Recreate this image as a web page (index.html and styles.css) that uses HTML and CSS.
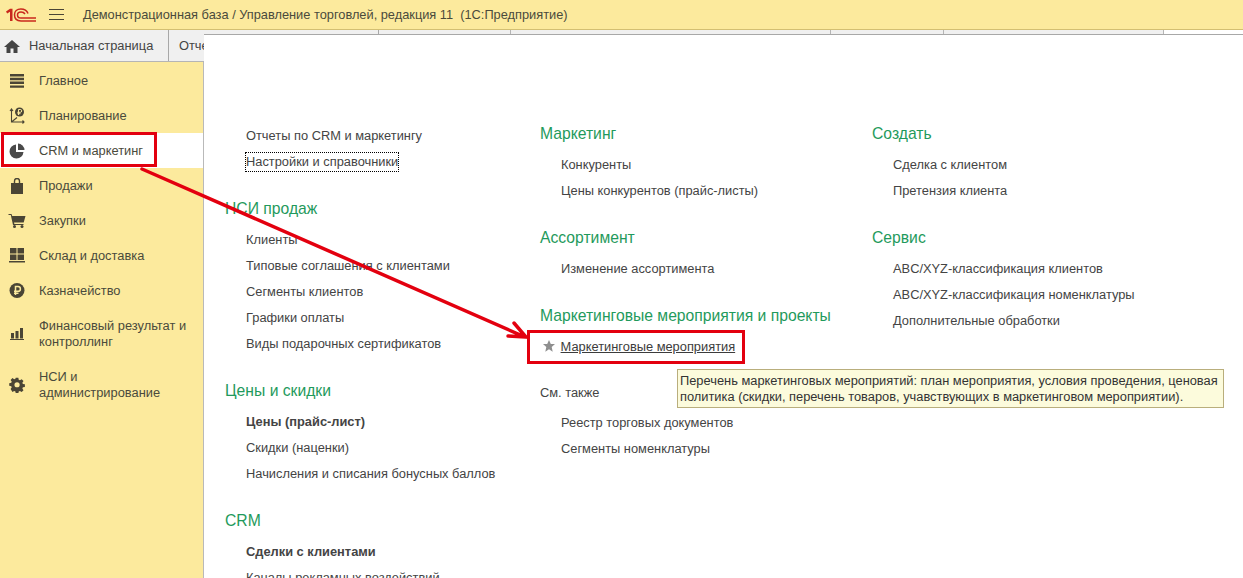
FILE: index.html
```html
<!DOCTYPE html>
<html>
	<head>
		<meta charset="utf-8" />
		<title>Демонстрационная база / Управление торговлей, редакция 11</title>
		<link rel="stylesheet" href="styles.css">
	</head>
	<body>
		<div class="app">
			<header class="topbar">
				<svg class="logo" width="30" height="14" viewBox="0 0 30 14">
					<path d="M0 3.500 L4 .8 H6.500 V13 H4 V3.800 L1.200 5.500 Z" fill="#c9281d"/>
					<path d="M22 5.500 C21 2.800 18 1 14.800 1 C11 1 8.500 3.500 8.500 6.800 C8.500 10.500 11 13 15 13 H30" fill="none" stroke="#c9281d" stroke-width="1.500"/>
					<path d="M19 6 C18.300 4.800 16.800 4 15 4 C12.800 4 11.500 5.200 11.500 6.900 C11.500 8.800 12.800 10 15 10 H30" fill="none" stroke="#c9281d" stroke-width="1.500"/>
				</svg>
				<div class="burger"><i></i><i></i><i></i></div>
				<span class="title">Демонстрационная база / Управление торговлей, редакция 11&nbsp; (1С:Предприятие)</span>
			</header>

			<nav class="tabs">
				<div class="tab home-tab">
					<svg width="16" height="14" viewBox="0 0 16 14"><path d="M8 1 L16 8 H13.500 V14 H9.500 V9.500 H6.500 V14 H2.500 V8 H0 Z" fill="#444"/></svg>
					<span>Начальная страница</span>
				</div>
				<div class="tab second-tab">Отчеты</div>
				<div class="tab-stub stub-a"></div>
				<div class="tab-stub stub-b"></div>
				<div class="tab-stub stub-c"></div>
				<div class="tab-stub stub-d"></div>
				<div class="tab-stub stub-e"></div>
			</nav>

			<div class="workspace">
				<aside class="sidebar">
					<a class="side-item">
						<svg width="16" height="14" viewBox="0 0 16 14"><path d="M1 0h14v2.400H1zM1 3.800h14v2.400H1zM1 7.600h14v2.400H1zM1 11.400h14v2.400H1z" fill="#4a4535"/></svg>
						<span>Главное</span>
					</a>
					<a class="side-item">
						<svg width="18" height="18" viewBox="0 0 18 18"><path d="M3.500 2v13H16M2 4l1.500-2L5 4M14.500 13.500L16 15l-1.500 1.500M3.500 15L9 10.500" fill="none" stroke="#4a4535" stroke-width="1.100"/><circle cx="11.500" cy="5" r="4.500" fill="#4a4535"/><path d="M10.500 8V2.500h1.800a1.400 1.400 0 0 1 0 2.800h-3M9.500 6.700h3" fill="none" stroke="#fcea9d"/></svg>
						<span>Планирование</span>
					</a>
					<a class="side-item active">
						<svg width="16" height="16" viewBox="0 0 16 16"><path d="M7 1.500A7 7 0 1 0 14.500 9H7z" fill="#4a4a4a"/><path d="M9 0.500A7 7 0 0 1 15.500 7H9z" fill="#4a4a4a"/></svg>
						<span>CRM и маркетинг</span>
					</a>
					<a class="side-item">
						<svg width="14" height="16" viewBox="0 0 14 16"><path d="M1 5h12v11H1z" fill="#4a4535"/><path d="M4.500 7V3a2.500 2.500 0 0 1 5 0v4" fill="none" stroke="#4a4535" stroke-width="1.400"/></svg>
						<span>Продажи</span>
					</a>
					<a class="side-item">
						<svg width="17" height="15" viewBox="0 0 17 15"><path d="M0 1h3l.7 2H17l-1.800 6.500H5.500L5.900 11H15v1H4.500L2.300 2H0z" fill="#4a4535"/><circle cx="6" cy="13.500" r="1.500" fill="#4a4535"/><circle cx="13.500" cy="13.500" r="1.500" fill="#4a4535"/></svg>
						<span>Закупки</span>
					</a>
					<a class="side-item">
						<svg width="16" height="15" viewBox="0 0 16 15"><path d="M1 0h6.500v5.500H1zM8.500 0H15v5.500H8.500zM1 6.500h6.500V12H1zM8.500 6.500H15V12H8.500zM0 13h16v1.500H0z" fill="#4a4535"/></svg>
						<span>Склад и доставка</span>
					</a>
					<a class="side-item">
						<svg width="15" height="15" viewBox="0 0 15 15"><circle cx="7.500" cy="7.500" r="7.500" fill="#4a4535"/><path d="M6 12V3.500h2.500a2.400 2.400 0 0 1 0 4.800H4.500M4.500 10.200H9" fill="none" stroke="#fcea9d" stroke-width="1.500"/></svg>
						<span>Казначейство</span>
					</a>
					<a class="side-item two-line">
						<svg width="14" height="12" viewBox="0 0 14 12"><path d="M1 5h3v5.500H1zM5.500 3h3v7.500h-3zM10 0h3v10.500h-3zM0 11h14v1H0z" fill="#4a4535"/></svg>
						<span>Финансовый результат и<br>контроллинг</span>
					</a>
					<a class="side-item two-line">
						<svg width="16" height="16" viewBox="0 0 16 16"><path d="M6.500 0h3l.4 2.300 1.400.6 2-1.300 2.100 2.100-1.300 2 .6 1.400 2.300.4v3l-2.300.4-.6 1.400 1.300 2-2.100 2.100-2-1.300-1.400.6-.4 2.300h-3l-.4-2.300-1.400-.6-2 1.300L.6 13l1.300-2-.6-1.400L-1 9.200v-3l2.300-.4.6-1.400-1.300-2L2.700 .3l2 1.300 1.400-.6zM8 5a3 3 0 1 0 0 6 3 3 0 0 0 0-6z" fill="#4a4535" transform="translate(1.100 .8) scale(.87)"/></svg>
						<span>НСИ и<br>администрирование</span>
					</a>
				</aside>

				<main class="panel">
					<section class="column col-first">
						<ul class="links">
							<li>Отчеты по CRM и маркетингу</li>
							<li><span class="focused">Настройки и справочники</span></li>
						</ul>
						<h2>НСИ продаж</h2>
						<ul class="links">
							<li>Клиенты</li>
							<li>Типовые соглашения с клиентами</li>
							<li>Сегменты клиентов</li>
							<li>Графики оплаты</li>
							<li>Виды подарочных сертификатов</li>
						</ul>
						<h2>Цены и скидки</h2>
						<ul class="links">
							<li class="bold">Цены (прайс-лист)</li>
							<li>Скидки (наценки)</li>
							<li>Начисления и списания бонусных баллов</li>
						</ul>
						<h2>CRM</h2>
						<ul class="links">
							<li class="bold">Сделки с клиентами</li>
							<li>Каналы рекламных воздействий</li>
						</ul>
					</section>

					<section class="column col-second">
						<h2>Маркетинг</h2>
						<ul class="links">
							<li>Конкуренты</li>
							<li>Цены конкурентов (прайс-листы)</li>
						</ul>
						<h2>Ассортимент</h2>
						<ul class="links">
							<li>Изменение ассортимента</li>
						</ul>
						<h2>Маркетинговые мероприятия и проекты</h2>
						<ul class="links">
							<li class="starred">
								<svg class="star" width="12" height="12" viewBox="0 0 12 12"><path d="M6 0l1.800 4H12L8.700 7l1 4.800L6 9.300 2.300 11.800l1-4.800L0 4h4.200z" fill="#8f8f8f"/></svg>
								<u>Маркетинговые мероприятия</u>
							</li>
						</ul>
						<div class="see-also">См. также</div>
						<ul class="links">
							<li>Реестр торговых документов</li>
							<li>Сегменты номенклатуры</li>
						</ul>
					</section>

					<section class="column">
						<h2>Создать</h2>
						<ul class="links">
							<li>Сделка с клиентом</li>
							<li>Претензия клиента</li>
						</ul>
						<h2>Сервис</h2>
						<ul class="links">
							<li>ABC/XYZ-классификация клиентов</li>
							<li>ABC/XYZ-классификация номенклатуры</li>
							<li>Дополнительные обработки</li>
						</ul>
					</section>
				</main>
			</div>
		</div>

		<div class="tooltip">Перечень маркетинговых мероприятий: план мероприятия, условия проведения, ценовая политика (скидки, перечень товаров, учавствующих в маркетинговом мероприятии).</div>

		<div class="callout callout-crm"></div>
		<div class="callout callout-event"></div>
		<svg class="arrow" width="1243" height="578" viewBox="0 0 1243 578">
			<path d="M142 169 L525 337 M514 323 L526 337 L508 336" stroke="#e3000f" stroke-width="3.500" fill="none" stroke-linecap="round"/>
		</svg>
	</body>
</html>
```

FILE: styles.css
```css
* {
	padding: 0;
	margin: 0;
	box-sizing: border-box;
}

html, body {
	height: 100%;
	overflow: hidden;
}

body {
	position: relative;
	background: #fff;
	font-family: 'Liberation Sans', Arial, sans-serif;
	font-size: 12.85px;
	color: #444;
}

.app {
	display: flex;
	flex-direction: column;
	height: 100%;
}

.topbar {
	display: flex;
	align-items: center;
	height: 30px;
	flex-shrink: 0;
	padding-left: 6px;
	background: #fcea9d;
	border-bottom: 1px solid #d3bf72;
}

.logo {
	margin: 1px 13px 0 0;
}

.burger {
	display: flex;
	flex-direction: column;
	gap: 4px;
	width: 15px;
	margin-right: 19px;
}

.burger i {
	display: block;
	height: 1px;
	background: #4a4535;
}

.title {
	color: #4a4a3c;
	font-size: 12.8px;
	white-space: nowrap;
}

.tabs {
	display: flex;
	height: 32px;
	flex-shrink: 0;
	background: #f0f0f0;
	border-bottom: 1px solid #b5b5b5;
}

.tab {
	display: flex;
	align-items: center;
	border-right: 1px solid #a8a8a8;
	white-space: nowrap;
}

.home-tab {
	gap: 9px;
	width: 169px;
	padding-left: 4px;
}

.second-tab {
	width: 210px;
	padding-left: 10px;
}

.tab-stub {
	border-right: 1px solid #b5b5b5;
}

.stub-a { width: 132px; }
.stub-b { width: 320px; }
.stub-c { width: 113px; }
.stub-d { width: 220px; }
.stub-e { flex: 1; background: #fff; border-right: none; }

.workspace {
	display: flex;
	flex: 1;
	min-height: 0;
}

.sidebar {
	width: 204px;
	flex-shrink: 0;
	padding-top: 1px;
	background: #fcea9d;
	border-right: 1px solid #b9b9b9;
}

.side-item {
	display: flex;
	align-items: center;
	height: 35px;
	line-height: 16px;
	color: #4a4a3c;
}

.side-item svg {
	flex-shrink: 0;
	width: 24px;
	margin: 0 10px 0 5px;
}

.side-item.two-line {
	height: 51px;
}

.side-item.active {
	background: #fff;
}

.panel {
	position: relative;
	display: flex;
	flex: 1;
	margin-top: -28px;
	padding: 88px 0 0 21px;
	background: #fff;
	border-top: 1px solid #a8a8a8;
	overflow: hidden;
}

.column {
	flex-shrink: 0;
}

.col-first {
	width: 315px;
}

.col-second {
	width: 332px;
}

.panel h2 {
	margin: 23px 0 7px;
	font-size: 15.7px;
	font-weight: normal;
	line-height: 22px;
	color: #1f9a5c;
}

.panel .column:not(.col-first) h2:first-child {
	margin-top: 0;
}

.links {
	list-style: none;
	padding-left: 21px;
}

.links li {
	height: 26px;
	line-height: 26px;
	white-space: nowrap;
}

.links .bold {
	font-weight: bold;
}

.focused {
	display: inline-block;
	height: 18px;
	line-height: 17px;
	outline: 1px dotted #000;
	outline-offset: 0;
}

.starred {
	color: #3c3c3c;
}

.star {
	margin: 0 2px 0 -18px;
	vertical-align: -1px;
}

.see-also {
	margin-top: 20px;
	margin-bottom: 4px;
	line-height: 26px;
}

.tooltip {
	position: absolute;
	left: 677px;
	top: 369px;
	width: 547px;
	height: 39px;
	padding: 3px 2px;
	line-height: 16px;
	font-size: 12.85px;
	color: #333;
	background: #fcfbdc;
	border: 1px solid #b9ae7c;
}

.callout {
	position: absolute;
	border: 3px solid #e3000f;
}

.callout-crm {
	left: 1px;
	top: 132px;
	width: 156px;
	height: 35px;
}

.callout-event {
	left: 527px;
	top: 330px;
	width: 218px;
	height: 34px;
}

.arrow {
	position: absolute;
	left: 0;
	top: 0;
	pointer-events: none;
}
```
